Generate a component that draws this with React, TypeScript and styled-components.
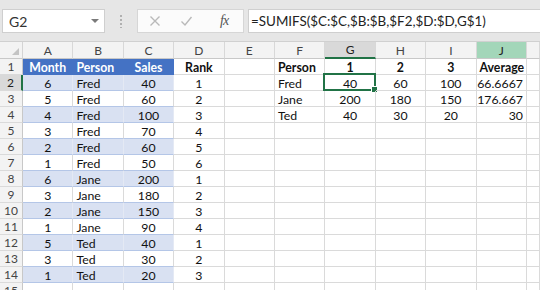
import React from 'react';
import styled, { createGlobalStyle, css } from 'styled-components';

const Global = createGlobalStyle`
    html, body {
        margin: 0;
        padding: 0;
        background: #ffffff;
    }
    body {
        width: 540px;
        height: 290px;
        overflow: hidden;
        font-family: Lato, "Liberation Sans", sans-serif;
    }
`;

const Window = styled.div`
    width: 540px;
    height: 290px;
    overflow: hidden;
    display: flex;
    flex-direction: column;
    background: #ffffff;
`;

const Toolbar = styled.div`
    height: 42px;
    flex: none;
    background: #e6e6e6;
    display: flex;
    align-items: flex-start;
    padding: 9px 0 0 2px;
    box-sizing: border-box;
    border-bottom: 1px solid #d0d0d0;
`;

const NameBox = styled.div`
    width: 103px;
    height: 24px;
    box-sizing: border-box;
    background: #ffffff;
    border: 1px solid #cfcfcf;
    display: flex;
    align-items: center;
    justify-content: space-between;
    padding: 0 5px 0 6px;
    font-size: 14px;
    color: #333;
`;

const Caret = styled.span`
    width: 0;
    height: 0;
    border-left: 4px solid transparent;
    border-right: 4px solid transparent;
    border-top: 4px solid #7a7a7a;
`;

const Grip = styled.div`
    width: 2px;
    height: 14px;
    margin: 5px 15px 0 15px;
    background-image: radial-gradient(circle, #b0b0b0 0.9px, transparent 1px);
    background-size: 2px 4px;
`;

const ActionBox = styled.div`
    width: 107px;
    height: 24px;
    box-sizing: border-box;
    background: #fbfbfb;
    border: 1px solid #d6d6d6;
    display: flex;
    align-items: center;
    padding: 0 10px 0 11px;
    gap: 19px;
`;

const Fx = styled.span`
    font-family: "Liberation Serif", serif;
    font-style: italic;
    font-size: 14px;
    color: #555;
    margin-left: 8px;
    letter-spacing: -1px;
`;

const FormulaBox = styled.div`
    flex: 1;
    height: 24px;
    margin-left: 4px;
    box-sizing: border-box;
    background: #ffffff;
    border: 1px solid #cfcfcf;
    border-right: none;
    display: flex;
    align-items: center;
    padding-left: 2px;
    font-size: 13.4px;
    color: #222;
    white-space: nowrap;
`;

const Sheet = styled.div`
    display: grid;
    grid-template-columns: 23px repeat(10, 50.4px) 1fr;
    grid-template-rows: 17px;
    grid-auto-rows: 16px;
    font-size: 12.3px;
`;

const Corner = styled.div`
    background: #f3f3f3;
    border-right: 1px solid #d4d4d4;
    border-bottom: 1px solid #c8c8c8;
    position: relative;
    &::after {
        content: '';
        position: absolute;
        right: 3px;
        bottom: 3px;
        border-left: 7px solid transparent;
        border-bottom: 7px solid #c4c4c4;
    }
`;

type HeadTone = 'plain' | 'active' | 'accent';

const ColHead = styled.div<{ $tone?: HeadTone }>`
    box-sizing: border-box;
    background: #f3f3f3;
    border-right: 1px solid #d8d8d8;
    border-bottom: 1px solid #c8c8c8;
    display: flex;
    align-items: center;
    justify-content: center;
    color: #444;
    font-size: 12px;
    ${(p) =>
        p.$tone === 'active' &&
        css`
            background: #d9d9d9;
            border-bottom: 2px solid #217346;
            color: #222;
        `}
    ${(p) =>
        p.$tone === 'accent' &&
        css`
            background: #a3d6b9;
            color: #222;
        `}
`;

const RowHead = styled.div<{ $active?: boolean }>`
    box-sizing: border-box;
    background: #f3f3f3;
    border-right: 1px solid #c8c8c8;
    border-bottom: 1px solid #dadada;
    display: flex;
    align-items: center;
    justify-content: center;
    color: #444;
    font-size: 12px;
    ${(p) =>
        p.$active &&
        css`
            background: #d9d9d9;
            border-right: 2px solid #217346;
            color: #222;
        `}
`;

type Kind = 'plain' | 'tableHead' | 'band' | 'tableRow';

const Cell = styled.div<{ $kind: Kind; $align: 'left' | 'center' | 'right'; $bold?: boolean }>`
    box-sizing: border-box;
    position: relative;
    border-right: 1px solid #dadada;
    border-bottom: 1px solid #dadada;
    display: flex;
    align-items: center;
    padding: 1px 3px 0 3px;
    color: #111;
    white-space: nowrap;
    font-weight: ${(p) => (p.$bold ? 700 : 400)};
    justify-content: ${(p) =>
        p.$align === 'left' ? 'flex-start' : p.$align === 'right' ? 'flex-end' : 'center'};
    ${(p) =>
        p.$kind === 'tableHead' &&
        css`
            background: #4472c4;
            color: #ffffff;
            border-right-color: #4472c4;
            border-bottom-color: #4472c4;
        `}
    ${(p) =>
        p.$kind === 'band' &&
        css`
            background: #d9e1f2;
            border-bottom-color: #b4c6e7;
            border-right-color: #e4e9f4;
        `}
    ${(p) =>
        p.$kind === 'tableRow' &&
        css`
            border-bottom-color: #b4c6e7;
        `}
`;

const Selection = styled.div`
    position: absolute;
    left: -2px;
    top: -2px;
    right: -1px;
    bottom: -1px;
    border: 2px solid #217346;
    pointer-events: none;
    &::after {
        content: '';
        position: absolute;
        right: -4px;
        bottom: -4px;
        width: 5px;
        height: 5px;
        background: #217346;
        border: 1px solid #ffffff;
    }
`;

const cols = ['A', 'B', 'C', 'D', 'E', 'F', 'G', 'H', 'I', 'J', ''];

const sales: [string, string, string, string][] = [
    ['6', 'Fred', '40', '1'],
    ['5', 'Fred', '60', '2'],
    ['4', 'Fred', '100', '3'],
    ['3', 'Fred', '70', '4'],
    ['2', 'Fred', '60', '5'],
    ['1', 'Fred', '50', '6'],
    ['6', 'Jane', '200', '1'],
    ['3', 'Jane', '180', '2'],
    ['2', 'Jane', '150', '3'],
    ['1', 'Jane', '90', '4'],
    ['5', 'Ted', '40', '1'],
    ['3', 'Ted', '30', '2'],
    ['1', 'Ted', '20', '3'],
];

const summary: string[][] = [
    ['Fred', '40', '60', '100', '66.6667'],
    ['Jane', '200', '180', '150', '176.667'],
    ['Ted', '40', '30', '20', '30'],
];

const CrossIcon = () => (
    <svg width="12" height="12" viewBox="0 0 12 12">
        <path d="M1.5 1.5 L10.5 10.5 M10.5 1.5 L1.5 10.5" stroke="#b9b9b9" strokeWidth="1.4" fill="none" />
    </svg>
);

const CheckIcon = () => (
    <svg width="13" height="12" viewBox="0 0 13 12">
        <path d="M1.5 6.5 L5 10 L11.5 2" stroke="#b9b9b9" strokeWidth="1.4" fill="none" />
    </svg>
);

const renderRow = (r: number) => {
    const cells: React.ReactNode[] = [];
    const isHead = r === 1;
    const data = !isHead && r <= 14 ? sales[r - 2] : null;
    const tableKind: Kind = isHead ? 'tableHead' : data ? (r % 2 === 0 ? 'band' : 'tableRow') : 'plain';

    cells.push(
        <RowHead key="h" $active={r === 2}>
            {r}
        </RowHead>
    );

    // A-C: the formatted table
    const headA = ['Month', 'Person', 'Sales'];
    const alignA: ('center' | 'left')[] = ['center', 'left', 'center'];
    for (let c = 0; c < 3; c++) {
        cells.push(
            <Cell key={`t${c}`} $kind={tableKind} $align={alignA[c]} $bold={isHead}>
                {isHead ? headA[c] : data ? data[c] : ''}
            </Cell>
        );
    }

    // D: rank
    cells.push(
        <Cell key="d" $kind="plain" $align="center" $bold={isHead}>
            {isHead ? 'Rank' : data ? data[3] : ''}
        </Cell>
    );

    // E: empty
    cells.push(<Cell key="e" $kind="plain" $align="left" />);

    // F-J: summary
    const sum = r >= 2 && r <= 4 ? summary[r - 2] : null;
    const headF = ['Person', '1', '2', '3', 'Average'];
    const alignF: ('left' | 'center' | 'right')[] = isHead
        ? ['left', 'center', 'center', 'center', 'left']
        : ['left', 'center', 'center', 'center', 'right'];
    for (let c = 0; c < 5; c++) {
        cells.push(
            <Cell key={`s${c}`} $kind="plain" $align={alignF[c]} $bold={isHead}>
                {isHead ? headF[c] : sum ? sum[c] : ''}
                {r === 2 && c === 1 && <Selection />}
            </Cell>
        );
    }

    cells.push(<Cell key="k" $kind="plain" $align="left" />);
    return cells;
};

const App: React.FC = () => {
    const rows = Array.from({ length: 15 }, (_, i) => i + 1);

    return (
        <Window>
            <Global />
            <Toolbar>
                <NameBox>
                    G2
                    <Caret />
                </NameBox>
                <Grip />
                <ActionBox>
                    <CrossIcon />
                    <CheckIcon />
                    <Fx>fx</Fx>
                </ActionBox>
                <FormulaBox>=SUMIFS($C:$C,$B:$B,$F2,$D:$D,G$1)</FormulaBox>
            </Toolbar>
            <Sheet>
                <Corner />
                {cols.map((c, i) => (
                    <ColHead key={i} $tone={c === 'G' ? 'active' : c === 'J' ? 'accent' : 'plain'}>
                        {c}
                    </ColHead>
                ))}
                {rows.map((r) => renderRow(r))}
            </Sheet>
        </Window>
    );
};

export default App;
